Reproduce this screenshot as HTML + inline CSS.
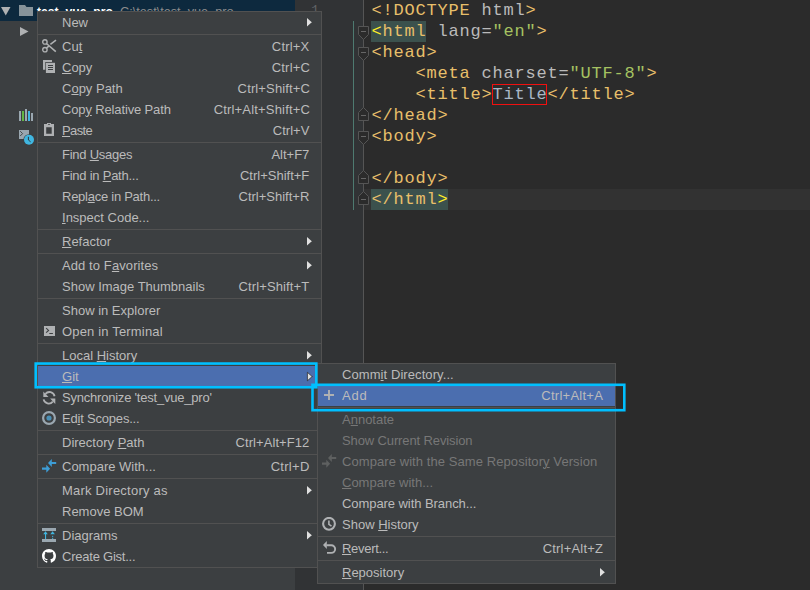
<!DOCTYPE html>
<html><head><meta charset="utf-8"><title>IDE</title><style>
*{margin:0;padding:0;box-sizing:border-box}
html,body{width:810px;height:590px;overflow:hidden;background:#2b2b2b}
body{position:relative;font-family:"Liberation Sans", sans-serif}
.abs,.row,.sep,.txt,.ic,.menu,.box{position:absolute}
.menu{background:#3c3f41;border:1px solid #515151}
.row{height:21px}
.row.sel{background:#4b6eaf}
.sep{height:1px;background:#515151}
.txt{font-size:13px;line-height:21px;height:21px;color:#bbbbbb;white-space:nowrap}
.txt.dis{color:#777777}
.txt u{text-decoration:underline;text-underline-offset:0.5px;text-decoration-thickness:1px}
.code{position:absolute;font-family:"Liberation Mono", monospace;font-size:17px;line-height:21px;height:21px;white-space:pre;letter-spacing:0.8px;padding-left:0.4px;color:#a9b7c6}
.lnum{font-family:"Liberation Mono", monospace;font-size:13px;line-height:21px;text-align:right;color:#606366}
.tg{color:#e8bf6a} .an{color:#bababa} .av{color:#a5c261} .tx{color:#a9b7c6} .mb{color:#ffef28}
</style></head>
<body>
<div class="abs" style="left:0;top:0;width:295px;height:590px;background:#3c3f41"></div>
<div class="abs" style="left:0;top:0;width:295px;height:21px;background:#0d293e"></div>
<svg class="ic" style="left:0;top:0" width="40" height="40" viewBox="0 0 40 40"><path d="M1 7 H10.5 L5.75 15.5 Z" fill="#afb1b3"/><path d="M19 5 H25 L26.5 7 H33 V16 H19 Z" fill="#87939a"/><path d="M20 27 L28.5 31.5 L20 36 Z" fill="#afb1b3"/></svg>
<div class="abs" style="left:37px;top:1.5px;font-size:12.2px;line-height:21px;color:#ffffff;font-weight:bold;white-space:nowrap">test_vue_pro</div>
<div class="abs" style="left:120px;top:1.5px;font-size:12.7px;line-height:21px;color:#8c8c8c;white-space:nowrap">C:\test\test_vue_pro</div>
<svg class="ic" style="left:0;top:95px" width="40" height="55" viewBox="0 95 40 55"><rect x="19" y="111" width="2" height="10" fill="#9aa7b0"/><rect x="22" y="111" width="2" height="10" fill="#62b543"/><rect x="25" y="109" width="2" height="12" fill="#9aa7b0"/><rect x="28" y="111" width="2" height="10" fill="#40b6e0"/><rect x="31" y="113" width="2" height="8" fill="#9aa7b0"/><rect x="19" y="130" width="10" height="9" fill="#9aa7b0"/><path d="M20.2 131.2 L22.6 133.6 L20.2 136" stroke="#3c3f41" stroke-width="0.9" fill="none"/><circle cx="29" cy="139.8" r="5.6" fill="#3c3f41"/><circle cx="29" cy="139.8" r="5" fill="#40b6e0"/><path d="M28.4 136.8 V140 L30.6 141.8" stroke="#2b2b2b" stroke-width="0.9" fill="none"/></svg>
<div class="abs" style="left:295px;top:0;width:69px;height:590px;background:#313335"></div>
<div class="abs" style="left:364px;top:189px;width:446px;height:21px;background:#323232"></div>
<div class="abs" style="left:371px;top:21px;width:55px;height:21px;background:#3b514d"></div>
<div class="abs" style="left:371px;top:189px;width:77px;height:21px;background:#3b514d"></div>
<div class="abs" style="left:353px;top:21px;width:1px;height:189px;background:#4e7a70"></div>
<div class="abs lnum" style="left:301px;top:0;width:18px">1</div>
<svg class="ic" style="left:350px;top:0" width="30" height="590" viewBox="350 0 30 590"><path d="M363.5 0 V590" stroke="#555555" stroke-width="1"/><path d="M358.5 26.5 H368.5 V34.5 L363.5 39.5 L358.5 34.5 Z" fill="#2b2b2b" stroke="#555555" stroke-width="1"/><path d="M361 31.5 H366" stroke="#666666" stroke-width="1"/><path d="M358.5 47.5 H368.5 V55.5 L363.5 60.5 L358.5 55.5 Z" fill="#2b2b2b" stroke="#555555" stroke-width="1"/><path d="M361 52.5 H366" stroke="#666666" stroke-width="1"/><path d="M358.5 120.5 H368.5 V112.5 L363.5 107.5 L358.5 112.5 Z" fill="#2b2b2b" stroke="#555555" stroke-width="1"/><path d="M361 115.5 H366" stroke="#666666" stroke-width="1"/><path d="M358.5 131.5 H368.5 V139.5 L363.5 144.5 L358.5 139.5 Z" fill="#2b2b2b" stroke="#555555" stroke-width="1"/><path d="M361 136.5 H366" stroke="#666666" stroke-width="1"/><path d="M358.5 183.5 H368.5 V175.5 L363.5 170.5 L358.5 175.5 Z" fill="#2b2b2b" stroke="#555555" stroke-width="1"/><path d="M361 178.5 H366" stroke="#666666" stroke-width="1"/><path d="M358.5 204.5 H368.5 V196.5 L363.5 191.5 L358.5 196.5 Z" fill="#2b2b2b" stroke="#555555" stroke-width="1"/><path d="M361 199.5 H366" stroke="#666666" stroke-width="1"/></svg>
<div class="code" style="left:371px;top:0px"><span class="tg">&lt;!DOCTYPE</span> <span class="an">html</span><span class="tg">&gt;</span></div>
<div class="code" style="left:371px;top:21px"><span class="mb">&lt;</span><span class="tg">html</span> <span class="an">lang</span><span class="an">=</span><span class="av">"en"</span><span class="tg">&gt;</span></div>
<div class="code" style="left:371px;top:42px"><span class="tg">&lt;head&gt;</span></div>
<div class="code" style="left:371px;top:63px">    <span class="tg">&lt;meta</span> <span class="an">charset</span><span class="an">=</span><span class="av">"UTF-8"</span><span class="tg">&gt;</span></div>
<div class="code" style="left:371px;top:84px">    <span class="tg">&lt;title&gt;</span><span class="tx">Title</span><span class="tg">&lt;/title&gt;</span></div>
<div class="code" style="left:371px;top:105px"><span class="tg">&lt;/head&gt;</span></div>
<div class="code" style="left:371px;top:126px"><span class="tg">&lt;body&gt;</span></div>
<div class="code" style="left:371px;top:147px"></div>
<div class="code" style="left:371px;top:168px"><span class="tg">&lt;/body&gt;</span></div>
<div class="code" style="left:371px;top:189px"><span class="tg">&lt;/html</span><span class="mb">&gt;</span></div>
<div class="abs" style="left:492px;top:84px;width:55px;height:21px;border:1px solid #f01010"></div>
<div class="menu" style="left:37px;top:11px;width:285px;height:557px"></div>
<div class="row" style="left:38px;top:12px;width:283px"></div>
<div class="txt lab" style="left:62px;top:12px">New</div>
<svg class="ic" style="left:307px;top:18px" width="8" height="12" viewBox="0 0 8 12" overflow="visible"><path d="M0 0 L4.2 3.8 L5 4.25 L4.2 4.7 L0 8.5 Z" fill="#e0e0e0"/></svg>
<div class="sep" style="left:38px;top:34px;width:283px"></div>
<div class="row" style="left:38px;top:36px;width:283px"></div>
<div class="txt lab" style="left:62px;top:36px">Cu<u>t</u></div>
<div class="txt sc" style="right:500.500px;top:36px;letter-spacing:0.200px">Ctrl+X</div>
<div class="row" style="left:38px;top:57px;width:283px"></div>
<div class="txt lab" style="left:62px;top:57px"><u>C</u>opy</div>
<div class="txt sc" style="right:499.900px;top:57px;letter-spacing:0.200px">Ctrl+C</div>
<div class="row" style="left:38px;top:78px;width:283px"></div>
<div class="txt lab" style="left:62px;top:78px">C<u>o</u>py Path</div>
<div class="txt sc" style="right:499.964px;top:78px;letter-spacing:0.136px">Ctrl+Shift+C</div>
<div class="row" style="left:38px;top:99px;width:283px"></div>
<div class="txt lab" style="left:62px;top:99px;letter-spacing:-0.141px">Cop<u>y</u> Relative Path</div>
<div class="txt sc" style="right:499.920px;top:99px;letter-spacing:0.180px">Ctrl+Alt+Shift+C</div>
<div class="row" style="left:38px;top:120px;width:283px"></div>
<div class="txt lab" style="left:62px;top:120px;letter-spacing:-0.600px"><u>P</u>aste</div>
<div class="txt sc" style="right:500.700px;top:120px">Ctrl+V</div>
<div class="sep" style="left:38px;top:142px;width:283px"></div>
<div class="row" style="left:38px;top:144px;width:283px"></div>
<div class="txt lab" style="left:62px;top:144px;letter-spacing:-0.240px">Find <u>U</u>sages</div>
<div class="txt sc" style="right:500.700px;top:144px">Alt+F7</div>
<div class="row" style="left:38px;top:165px;width:283px"></div>
<div class="txt lab" style="left:62px;top:165px;letter-spacing:-0.243px">Find in <u>P</u>ath...</div>
<div class="txt sc" style="right:500.700px;top:165px">Ctrl+Shift+F</div>
<div class="row" style="left:38px;top:186px;width:283px"></div>
<div class="txt lab" style="left:62px;top:186px;letter-spacing:-0.259px">Repl<u>a</u>ce in Path...</div>
<div class="txt sc" style="right:500.700px;top:186px">Ctrl+Shift+R</div>
<div class="row" style="left:38px;top:207px;width:283px"></div>
<div class="txt lab" style="left:62px;top:207px"><u>I</u>nspect Code...</div>
<div class="sep" style="left:38px;top:229px;width:283px"></div>
<div class="row" style="left:38px;top:231px;width:283px"></div>
<div class="txt lab" style="left:62px;top:231px"><u>R</u>efactor</div>
<svg class="ic" style="left:307px;top:237px" width="8" height="12" viewBox="0 0 8 12" overflow="visible"><path d="M0 0 L4.2 3.8 L5 4.25 L4.2 4.7 L0 8.5 Z" fill="#e0e0e0"/></svg>
<div class="sep" style="left:38px;top:253px;width:283px"></div>
<div class="row" style="left:38px;top:255px;width:283px"></div>
<div class="txt lab" style="left:62px;top:255px;letter-spacing:0.093px">Add to F<u>a</u>vorites</div>
<svg class="ic" style="left:307px;top:261px" width="8" height="12" viewBox="0 0 8 12" overflow="visible"><path d="M0 0 L4.2 3.8 L5 4.25 L4.2 4.7 L0 8.5 Z" fill="#e0e0e0"/></svg>
<div class="row" style="left:38px;top:276px;width:283px"></div>
<div class="txt lab" style="left:62px;top:276px">Show Image Thumbnails</div>
<div class="txt sc" style="right:500.564px;top:276px;letter-spacing:0.136px">Ctrl+Shift+T</div>
<div class="sep" style="left:38px;top:298px;width:283px"></div>
<div class="row" style="left:38px;top:300px;width:283px"></div>
<div class="txt lab" style="left:62px;top:300px">Show in Explorer</div>
<div class="row" style="left:38px;top:321px;width:283px"></div>
<div class="txt lab" style="left:62px;top:321px;letter-spacing:0.173px">Open in Terminal</div>
<div class="sep" style="left:38px;top:343px;width:283px"></div>
<div class="row" style="left:38px;top:345px;width:283px"></div>
<div class="txt lab" style="left:62px;top:345px">Local <u>H</u>istory</div>
<svg class="ic" style="left:307px;top:351px" width="8" height="12" viewBox="0 0 8 12" overflow="visible"><path d="M0 0 L4.2 3.8 L5 4.25 L4.2 4.7 L0 8.5 Z" fill="#e0e0e0"/></svg>
<div class="row sel" style="left:38px;top:366px;width:283px"></div>
<div class="txt lab" style="left:62px;top:366px"><u>G</u>it</div>
<svg class="ic" style="left:307px;top:372px" width="8" height="12" viewBox="0 0 8 12" overflow="visible"><path d="M0 0 L4.2 3.8 L5 4.25 L4.2 4.7 L0 8.5 Z" fill="#e0e0e0" stroke="#202020" stroke-width="0.7" transform="translate(0.4,0.3)"/></svg>
<div class="row" style="left:38px;top:387px;width:283px"></div>
<div class="txt lab" style="left:62px;top:387px;letter-spacing:-0.216px">Synchronize 'test_vue_pro'</div>
<div class="row" style="left:38px;top:408px;width:283px"></div>
<div class="txt lab" style="left:62px;top:408px;letter-spacing:-0.200px">Ed<u>i</u>t Scopes...</div>
<div class="sep" style="left:38px;top:430px;width:283px"></div>
<div class="row" style="left:38px;top:432px;width:283px"></div>
<div class="txt lab" style="left:62px;top:432px">Directory <u>P</u>ath</div>
<div class="txt sc" style="right:500.627px;top:432px;letter-spacing:0.073px">Ctrl+Alt+F12</div>
<div class="sep" style="left:38px;top:454px;width:283px"></div>
<div class="row" style="left:38px;top:456px;width:283px"></div>
<div class="txt lab" style="left:62px;top:456px">Compare With...</div>
<div class="txt sc" style="right:500.420px;top:456px;letter-spacing:0.280px">Ctrl+D</div>
<div class="sep" style="left:38px;top:478px;width:283px"></div>
<div class="row" style="left:38px;top:480px;width:283px"></div>
<div class="txt lab" style="left:62px;top:480px;letter-spacing:0.225px">Mark Directory as</div>
<svg class="ic" style="left:307px;top:486px" width="8" height="12" viewBox="0 0 8 12" overflow="visible"><path d="M0 0 L4.2 3.8 L5 4.25 L4.2 4.7 L0 8.5 Z" fill="#e0e0e0"/></svg>
<div class="row" style="left:38px;top:501px;width:283px"></div>
<div class="txt lab" style="left:62px;top:501px">Remove BOM</div>
<div class="sep" style="left:38px;top:523px;width:283px"></div>
<div class="row" style="left:38px;top:525px;width:283px"></div>
<div class="txt lab" style="left:62px;top:525px">Diagrams</div>
<svg class="ic" style="left:307px;top:531px" width="8" height="12" viewBox="0 0 8 12" overflow="visible"><path d="M0 0 L4.2 3.8 L5 4.25 L4.2 4.7 L0 8.5 Z" fill="#e0e0e0"/></svg>
<div class="row" style="left:38px;top:546px;width:283px"></div>
<div class="txt lab" style="left:62px;top:546px;letter-spacing:-0.231px">Create Gist...</div>
<svg class="ic" style="left:42px;top:39px" width="16" height="16" viewBox="0 0 16 16"><circle cx="2.9" cy="2.9" r="2.2" fill="none" stroke="#afb1b3" stroke-width="1.4"/><circle cx="2.9" cy="10.7" r="2.2" fill="none" stroke="#afb1b3" stroke-width="1.4"/><path d="M4.4 4.5 L13.8 12.6 M8.4 5.3 L14 1.1 M4.4 9.1 L6.8 7.1" stroke="#afb1b3" stroke-width="1.6" fill="none"/></svg>
<svg class="ic" style="left:42px;top:60px" width="16" height="16" viewBox="0 0 16 16"><path d="M1 0 H10 V2 H3.3 V9.8 H1 Z" fill="#afb1b3"/><rect x="3.9" y="2.8" width="9.1" height="10.2" fill="#afb1b3"/><path d="M6 5.5 H11 M6 7.5 H11 M6 9.5 H11" stroke="#3c3f41" stroke-width="1"/></svg>
<svg class="ic" style="left:42px;top:123px" width="16" height="16" viewBox="0 0 16 16"><path d="M2 1 H5 V0 H9 V1 H12 V13 H2 Z M4.2 4.2 V10.7 H9.7 V4.2 Z" fill="#afb1b3" fill-rule="evenodd"/><rect x="6.2" y="1.1" width="1.6" height="0.9" fill="#3c3f41"/></svg>
<svg class="ic" style="left:42px;top:324px" width="16" height="16" viewBox="0 0 16 16"><rect x="2" y="2" width="11" height="10" fill="#afb1b3"/><path d="M4.1 4.1 L6.6 6.4 L4.1 8.7" stroke="#3c3f41" stroke-width="1.1" fill="none"/><rect x="7.3" y="9" width="3.6" height="1" fill="#3c3f41"/></svg>
<svg class="ic" style="left:42px;top:390px" width="16" height="16" viewBox="0 0 16 16"><g transform="translate(0,-1.3)"><path d="M12.6 7.5 A5.3 5.3 0 0 0 3.4 5.2" stroke="#afb1b3" stroke-width="1.8" fill="none"/><path d="M1.3 2.8 V8.2 H6.5 Z" fill="#afb1b3"/><path d="M1.6 10.7 A5.3 5.3 0 0 0 10.8 13" stroke="#afb1b3" stroke-width="1.8" fill="none"/><path d="M13.3 15.3 V9.9 H8.1 Z" fill="#afb1b3"/></g></svg>
<svg class="ic" style="left:42px;top:411px" width="16" height="16" viewBox="0 0 16 16"><circle cx="7" cy="7" r="5.9" fill="none" stroke="#9aa7b0" stroke-width="2.2"/><circle cx="7" cy="7" r="2.6" fill="#4a8fb5"/></svg>
<svg class="ic" style="left:42px;top:459px" width="16" height="16" viewBox="0 0 16 16"><path d="M6 4 L9.8 0 V2.9 H14.2 V5.1 H9.8 V8 Z" fill="#3d9dd6"/><path d="M8.1 9.7 L4.3 5.7 V8.6 H-0.1 V10.8 H4.3 V13.7 Z" fill="#3d9dd6"/></svg>
<svg class="ic" style="left:42px;top:528px" width="16" height="16" viewBox="0 0 16 16"><rect x="0" y="0" width="14" height="3" fill="#9aa7b0"/><rect x="0" y="11" width="14" height="3" fill="#9aa7b0"/><path d="M1.2 6.2 L3.5 3.2 L5.8 6.2 Z M8.3 6.2 L10.6 3.2 L12.9 6.2 Z" fill="#40b6e0"/><rect x="3" y="6" width="1.1" height="5" fill="#40b6e0"/><rect x="10.1" y="7.8" width="1.1" height="1.1" fill="#40b6e0"/><rect x="10.1" y="9.8" width="1.1" height="1.1" fill="#40b6e0"/></svg>
<svg class="ic" style="left:42px;top:549px" width="16" height="16" viewBox="0 0 16 16"><path fill="#ffffff" transform="translate(0,0) scale(0.875)" d="M8 0C3.58 0 0 3.58 0 8c0 3.54 2.29 6.53 5.47 7.59.4.07.55-.17.55-.38 0-.19-.01-.82-.01-1.49-2.01.37-2.53-.49-2.69-.94-.09-.23-.48-.94-.82-1.13-.28-.15-.68-.52-.01-.53.63-.01 1.08.58 1.23.82.72 1.21 1.87.87 2.33.66.07-.52.28-.87.51-1.07-1.78-.2-3.64-.89-3.640-3.95 0-.87.31-1.59.82-2.15-.08-.2-.36-1.02.08-2.12 0 0 .67-.21 2.2.82.64-.18 1.32-.27 2-.27.68 0 1.36.09 2 .27 1.53-1.04 2.2-.82 2.2-.82.44 1.1.16 1.92.08 2.12.51.56.82 1.27.82 2.15 0 3.07-1.87 3.75-3.65 3.95.29.25.54.73.54 1.48 0 1.07-.01 1.93-.01 2.2 0 .21.15.46.55.38A8.013 8.013 0 0016 8c0-4.42-3.58-8-8-8z"/></svg>
<div class="menu" style="left:317px;top:363px;width:299px;height:221px"></div>
<div class="row" style="left:318px;top:364px;width:297px"></div>
<div class="txt lab" style="left:342px;top:364px;letter-spacing:0.078px">Comm<u>i</u>t Directory...</div>
<div class="row sel" style="left:318px;top:385px;width:297px"></div>
<div class="txt lab" style="left:342px;top:385px;letter-spacing:0.800px">Add</div>
<div class="txt sc" style="right:206.844px;top:385px;letter-spacing:0.256px">Ctrl+Alt+A</div>
<div class="sep" style="left:318px;top:407px;width:297px"></div>
<div class="row dis" style="left:318px;top:409px;width:297px"></div>
<div class="txt lab dis" style="left:342px;top:409px">A<u>n</u>notate</div>
<div class="row dis" style="left:318px;top:430px;width:297px"></div>
<div class="txt lab dis" style="left:342px;top:430px;letter-spacing:-0.120px">Show Current Revision</div>
<div class="row dis" style="left:318px;top:451px;width:297px"></div>
<div class="txt lab dis" style="left:342px;top:451px;letter-spacing:0.077px">Compare with the Same Repositor<u>y</u> Version</div>
<div class="row dis" style="left:318px;top:472px;width:297px"></div>
<div class="txt lab dis" style="left:342px;top:472px"><u>C</u>ompare with...</div>
<div class="row" style="left:318px;top:493px;width:297px"></div>
<div class="txt lab" style="left:342px;top:493px;letter-spacing:-0.067px">Compare with Branch...</div>
<div class="row" style="left:318px;top:514px;width:297px"></div>
<div class="txt lab" style="left:342px;top:514px">Show <u>H</u>istory</div>
<div class="sep" style="left:318px;top:536px;width:297px"></div>
<div class="row" style="left:318px;top:538px;width:297px"></div>
<div class="txt lab" style="left:342px;top:538px;letter-spacing:-0.300px"><u>R</u>evert...</div>
<div class="txt sc" style="right:206.911px;top:538px;letter-spacing:0.189px">Ctrl+Alt+Z</div>
<div class="sep" style="left:318px;top:560px;width:297px"></div>
<div class="row" style="left:318px;top:562px;width:297px"></div>
<div class="txt lab" style="left:342px;top:562px"><u>R</u>epository</div>
<svg class="ic" style="left:600px;top:568px" width="8" height="12" viewBox="0 0 8 12" overflow="visible"><path d="M0 0 L4.2 3.8 L5 4.25 L4.2 4.7 L0 8.5 Z" fill="#e0e0e0"/></svg>
<svg class="ic" style="left:322px;top:388px" width="16" height="16" viewBox="0 0 16 16"><path d="M7 2 V12 M2 7 H12" stroke="#afb1b3" stroke-width="1.9"/></svg>
<svg class="ic" style="left:322px;top:454px" width="16" height="16" viewBox="0 0 16 16"><path d="M6 4 L9.8 0 V2.9 H14.2 V5.1 H9.8 V8 Z" fill="#5e6060"/><path d="M8.1 9.7 L4.3 5.7 V8.6 H-0.1 V10.8 H4.3 V13.7 Z" fill="#5e6060"/></svg>
<svg class="ic" style="left:322px;top:517px" width="16" height="16" viewBox="0 0 16 16"><circle cx="7" cy="6.8" r="5.9" fill="none" stroke="#afb1b3" stroke-width="2.1"/><path d="M6.9 3.6 V7.3 L9.5 9.2" stroke="#afb1b3" stroke-width="1.6" fill="none"/></svg>
<svg class="ic" style="left:322px;top:541px" width="16" height="16" viewBox="0 0 16 16"><path d="M1 4 L4.8 0 V8 Z" fill="#afb1b3"/><path d="M4.5 4.2 H9.3 A3.85 3.85 0 0 1 9.3 11.9 H5" stroke="#afb1b3" stroke-width="1.9" fill="none"/></svg>
<svg class="ic" style="left:0;top:0" width="810" height="590" viewBox="0 0 810 590"><rect x="35.7" y="363.55" width="280.6" height="23.7" fill="none" stroke="#00bfff" stroke-width="2.6"/><rect x="312.5" y="384.8" width="311.8" height="25.4" fill="none" stroke="#00bfff" stroke-width="2.6"/></svg>
</body></html>
